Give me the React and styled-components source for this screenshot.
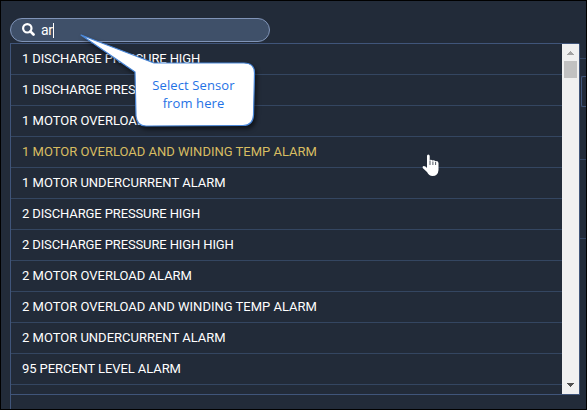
import React from 'react';
import styled, { createGlobalStyle } from 'styled-components';

const GlobalStyle = createGlobalStyle`
  *, *::before, *::after { box-sizing: border-box; }
  body { margin: 0; background: #222b39; overflow: hidden; }
`;

const Screen = styled.main`
  position: relative;
  display: flex;
  flex-direction: column;
  width: 587px;
  height: 410px;
  padding: 17px 0 0 9px;
  border: 1px solid #000;
  background: #222b39;
  font-family: Roboto, 'Noto Sans', sans-serif;
  overflow: hidden;
`;

const SearchBox = styled.div`
  display: flex;
  align-items: center;
  flex: none;
  width: 260px;
  height: 24px;
  margin-bottom: 1px;
  padding-left: 11px;
  border: 1px solid #8094b8;
  border-radius: 12px;
  background: #3f5069;
  color: #fff;
`;

const SearchIcon = styled.svg`
  margin-bottom: 1px;
`;

const Query = styled.span`
  margin-left: 6px;
  font-size: 14px;
  line-height: 20px;
  letter-spacing: -0.3px;
`;

const Caret = styled.span`
  width: 1px;
  height: 15px;
  background: #fff;
`;

const Body = styled.div`
  display: flex;
  height: 366px;
  border-left: 1px solid #40557a;
`;

const Dropdown = styled.section`
  display: flex;
  width: 569px;
  height: 352px;
  border: solid #40557a;
  border-width: 1px 1px 1px 0;
  border-top-right-radius: 2px;
`;

const List = styled.ul`
  flex: 1;
  margin: 0;
  padding: 0;
  list-style: none;
`;

const Row = styled.li`
  display: flex;
  align-items: center;
  height: 31px;
  padding: 0 0 2px 11px;
  border-bottom: 1px solid #344661;
  color: ${({ $active }) => ($active ? '#d8bd62' : '#fff')};
  font-size: 13px;
  letter-spacing: ${({ $spacing }) => $spacing}px;
  white-space: nowrap;
  cursor: pointer;
`;

const Scrollbar = styled.div`
  display: flex;
  flex-direction: column;
  align-items: center;
  justify-content: space-between;
  width: 17px;
  padding: 7px 0;
  background: #f0f0f0;
`;

const ScrollTop = styled.div`
  display: flex;
  flex-direction: column;
  align-items: center;
  gap: 6px;
`;

const Thumb = styled.div`
  width: 13px;
  height: 17px;
  background: #c1c1c1;
`;

const Backdrop = styled.aside`
  display: flex;
  flex-direction: column;
  width: 6px;
  padding-top: 15px;
`;

const BackdropSection = styled.div`
  flex: none;
  height: ${({ $height }) => $height}px;
  padding: 17px 0 0 1px;
  border-top: 1px solid #344661;
`;

const BackdropField = styled.div`
  height: 31px;
  border: solid #40557a;
  border-width: 1px 0 1px 1px;
  border-radius: 2px 0 0 2px;
`;

const Callout = styled.div`
  position: absolute;
  left: 74px;
  top: 28px;
  width: 190px;
  height: 110px;
`;

const Bubble = styled.svg`
  display: block;
  overflow: visible;
`;

const CalloutText = styled.p`
  position: absolute;
  left: 59px;
  top: 47px;
  width: 119px;
  margin: 0;
  color: #1f72e5;
  font: 13px/18px 'Open Sans', 'Noto Sans', sans-serif;
  letter-spacing: 0.1px;
  text-align: center;
  white-space: nowrap;
`;

const Pointer = styled.svg`
  position: absolute;
  left: 421px;
  top: 152px;
`;

const sensors = [
  { name: '1 DISCHARGE PRESSURE HIGH', spacing: -0.12 },
  { name: '1 DISCHARGE PRESSURE HIGH HIGH', spacing: -0.12 },
  { name: '1 MOTOR OVERLOAD ALARM', spacing: 0 },
  { name: '1 MOTOR OVERLOAD AND WINDING TEMP ALARM', spacing: 0, active: true },
  { name: '1 MOTOR UNDERCURRENT ALARM', spacing: 0 },
  { name: '2 DISCHARGE PRESSURE HIGH', spacing: -0.12 },
  { name: '2 DISCHARGE PRESSURE HIGH HIGH', spacing: -0.12 },
  { name: '2 MOTOR OVERLOAD ALARM', spacing: 0 },
  { name: '2 MOTOR OVERLOAD AND WINDING TEMP ALARM', spacing: 0 },
  { name: '2 MOTOR UNDERCURRENT ALARM', spacing: 0 },
  { name: '95 PERCENT LEVEL ALARM', spacing: -0.09 },
];

export default function App() {
  return (
    <>
      <GlobalStyle />
      <Screen>
        <SearchBox>
          <SearchIcon width="13" height="13" viewBox="0 0 13 13" fill="none" stroke="currentColor">
            <circle cx="5.300" cy="5.300" r="4.200" strokeWidth="2.2" />
            <path d="M8.400 8.400L11.500 11.500" strokeWidth="2.7" strokeLinecap="round" />
          </SearchIcon>
          <Query>ar</Query>
          <Caret />
        </SearchBox>
        <Body>
          <Dropdown>
            <List>
              {sensors.map(({ name, spacing, active }) => (
                <Row key={name} $spacing={spacing} $active={active}>{name}</Row>
              ))}
            </List>
            <Scrollbar>
              <ScrollTop>
                <svg width="7" height="4" fill="#a3a3a3" shapeRendering="crispEdges">
                  <path d="M3 0h1v1h1v1h1v1h1v1H0V3h1V2h1V1h1z" />
                </svg>
                <Thumb />
              </ScrollTop>
              <svg width="7" height="4" fill="#505050" shapeRendering="crispEdges">
                <path d="M0 0h7v1H6v1H5v1H4v1H3V3H2V2H1V1H0z" />
              </svg>
            </Scrollbar>
          </Dropdown>
          <Backdrop>
            <BackdropSection $height={101}><BackdropField /></BackdropSection>
            <BackdropSection $height={79} />
            <BackdropSection $height={79} />
          </Backdrop>
        </Body>
        <Callout>
          <Bubble width="190" height="110" viewBox="75 29 190 110">
            <path
              d="M81 35L154 63L244 63Q254.500 63 254.500 73L253.500 115Q253 125.500 243 125.500L146 126Q137 126 136 116L135 72Z"
              fill="#fff"
              stroke="#4a87d8"
              strokeWidth="1.2"
              strokeLinejoin="round"
              filter="drop-shadow(2px 3px 2px rgba(0,0,0,0.55))"
            />
          </Bubble>
          <CalloutText>Select Sensor<br />from here</CalloutText>
        </Callout>
        <Pointer width="20" height="26" viewBox="0 0 20 26">
          <path
            d="M5 3Q5 1.500 6.300 1.500T7.700 3V7Q9.500 6.300 10.500 7.500Q12.200 6.700 13.200 8Q16.500 7.700 16.500 10V17Q16 23 10.500 23Q7 23 5 19L0.700 15Q0.200 13.200 1.800 13Q3.500 13 5 15Z"
            fill="#fff"
          />
          <path d="M8 7.500V12M10.900 8.500V12M13.600 8.800V12" stroke="#222b39" strokeWidth=".8" />
        </Pointer>
      </Screen>
    </>
  );
}
